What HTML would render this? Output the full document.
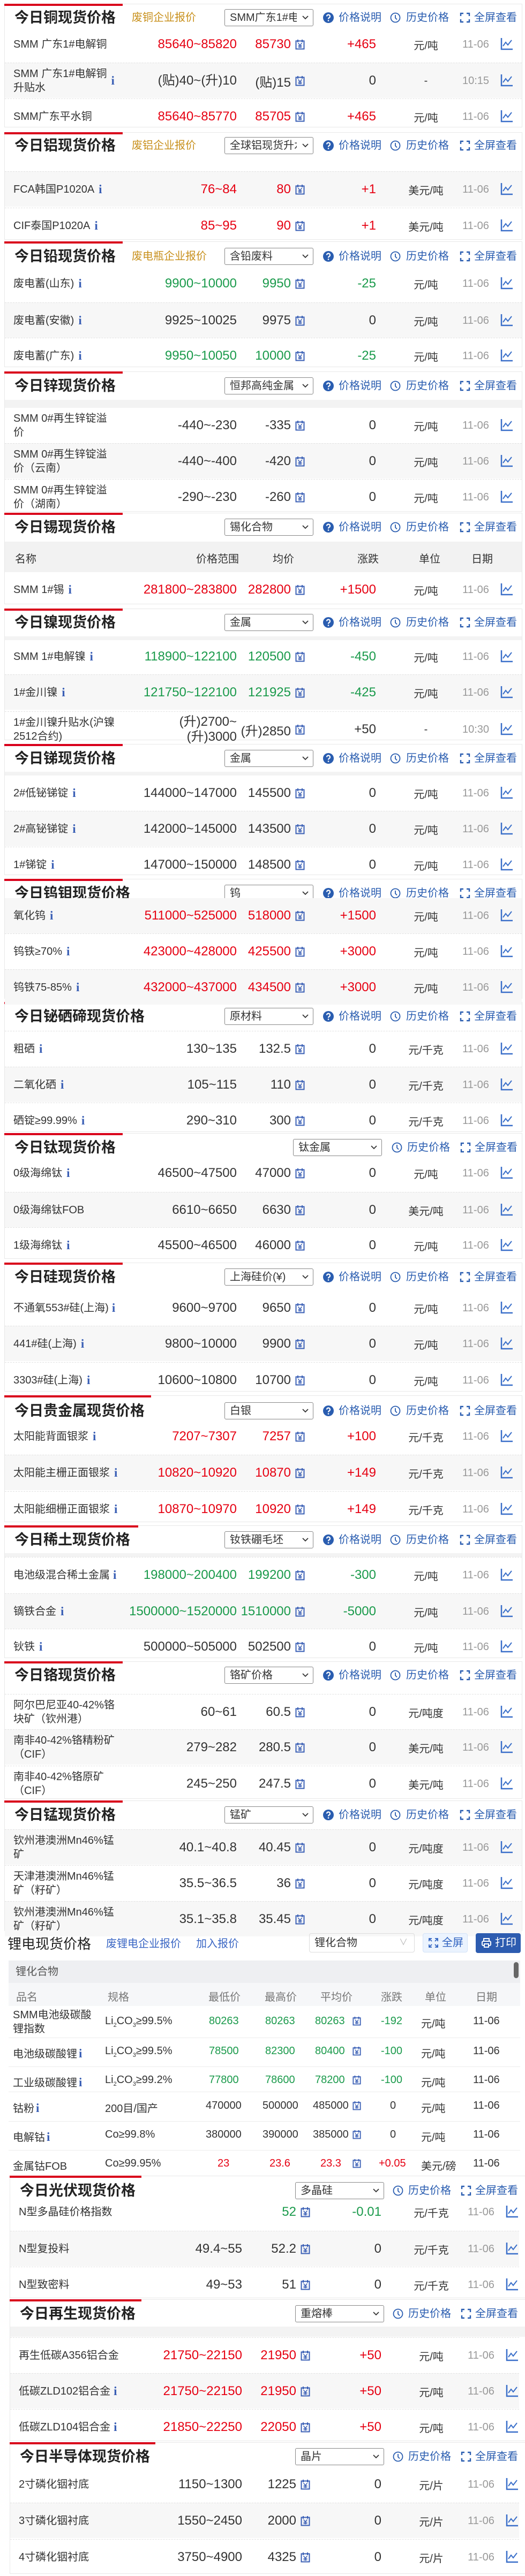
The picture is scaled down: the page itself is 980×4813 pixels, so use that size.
<!DOCTYPE html>
<html><head><meta charset="utf-8">
<style>
*{box-sizing:border-box}
body{margin:0;width:980px;height:4813px;position:relative;overflow:hidden;background:#fff;font-family:"Liberation Sans","Noto Sans CJK SC",sans-serif;color:#333}
.p{position:absolute;left:8px;width:967px;border:1px solid #e8e8e8;background:#fff}
.rb{position:absolute;left:8px;height:4px;background:#d9001b;width:221px}
.band{position:absolute;left:9px;width:965px;background:#f3f3f3}
.h{position:absolute;left:0;width:980px;height:40px;line-height:40px}
.h>*{position:absolute;top:0}
.t{left:27px;font-size:27px;font-weight:bold;color:#222;letter-spacing:0}
.lk{left:246px;font-size:20px;color:#c8901c}
.sel{left:419px;top:4px!important;width:166px;height:32px;border:1px solid #888;border-radius:3px;font-size:20px;line-height:30px;padding-left:9px;overflow:hidden;white-space:nowrap;background:#fff}
.sel svg{position:absolute;right:8px;top:11px}
.sel span{display:block;width:125px;overflow:hidden}
.hi{top:10px!important}
.ht{font-size:20px;color:#2a5db0}
.r{position:absolute;left:9px;width:965px;height:66px;border-top:1px dashed #e2e2e2}
.r.g{background:#f7f7f7}
.r>div{position:absolute;top:0;height:66px;display:flex;align-items:center}
.n{left:16px;width:240px;font-size:20px;line-height:26px}
.rg{left:180px;width:253px;justify-content:flex-end;font-size:24px;text-align:right;line-height:28px}
.av{left:420px;width:114px;justify-content:flex-end;font-size:24px}
.ch{left:580px;width:113px;justify-content:flex-end;font-size:24px}
.un{left:736px;width:100px;justify-content:center;font-size:20px}
.dt{left:839px;width:80px;justify-content:center;font-size:20px;color:#999}
.yi{position:absolute;left:542px;top:23px}
.gi{position:absolute;left:925px;top:20px}
.R{color:#e60012}.G{color:#1a9a4b}
.i{font-family:"Liberation Serif",serif;font-weight:bold;color:#3a5fb5;font-size:23px;margin-left:8px}
.sh{position:absolute;left:10px;top:0;width:980px;height:1px}
.lt{position:absolute;font-size:20px}
</style></head><body>
<svg width="0" height="0" style="position:absolute">
<defs>
<symbol id="y" viewBox="0 0 18 20"><rect x="1.5" y="3.5" width="15" height="15" fill="none" stroke="#3a5fb5" stroke-width="2"/><path d="M5 1v5M13 1v5" stroke="#3a5fb5" stroke-width="2"/><path d="M5.5 7.5l3.5 4 3.5-4M9 11.5v5M5.5 12.5h7M5.5 15h7" stroke="#3a5fb5" stroke-width="1.5" fill="none"/></symbol>
<symbol id="c" viewBox="0 0 24 24"><path d="M2 1v21h21" stroke="#3a6fc9" stroke-width="2.5" fill="none"/><path d="M5 16l5-7 4 5 7-9" stroke="#3a6fc9" stroke-width="2" fill="none"/></symbol>
<symbol id="q" viewBox="0 0 20 20"><circle cx="10" cy="10" r="10" fill="#2a5db0"/><path d="M7 7.5a3 3 0 1 1 4.5 2.6c-1 .6-1.5 1.1-1.5 2.4" stroke="#fff" stroke-width="2.2" fill="none"/><circle cx="10" cy="15.5" r="1.3" fill="#fff"/></symbol>
<symbol id="k" viewBox="0 0 20 20"><circle cx="10" cy="10" r="8.5" stroke="#2a5db0" stroke-width="1.8" fill="none"/><path d="M10 5v5.5l3 3" stroke="#2a5db0" stroke-width="1.8" fill="none"/></symbol>
<symbol id="f" viewBox="0 0 20 20"><path d="M2 7V2h5M13 2h5v5M18 13v5h-5M7 18H2v-5" stroke="#2a5db0" stroke-width="2.4" fill="none"/></symbol>
<symbol id="v" viewBox="0 0 12 8"><path d="M1 1l5 5 5-5" stroke="#333" stroke-width="1.8" fill="none"/></symbol>
</defs></svg>

<!-- panels -->
<div class="p" style="top:7px;height:231px"></div><div class="rb" style="top:7px"></div>
<div class="p" style="top:247px;height:201px"></div><div class="rb" style="top:247px"></div>
<div class="p" style="top:451px;height:235px"></div><div class="rb" style="top:451px"></div>
<div class="p" style="top:694px;height:262px"></div><div class="rb" style="top:694px"></div>
<div class="band" style="top:747px;height:15px"></div>
<div class="p" style="top:958px;height:171px"></div><div class="rb" style="top:958px"></div>
<div class="band" style="top:1012px;height:57px;background:#f2f2f2"></div>
<div class="p" style="top:1137px;height:246px"></div><div class="rb" style="top:1137px"></div>
<div class="band" style="top:1189px;height:7px"></div>
<div class="p" style="top:1390px;height:245px"></div><div class="rb" style="top:1390px"></div>
<div class="band" style="top:1442px;height:7px"></div>
<div class="p" style="top:1642px;height:224px"></div><div class="rb" style="top:1642px"></div>
<div class="p" style="top:1872px;height:243px"></div><div class="rb" style="top:1872px;width:278px"></div>
<div class="p" style="top:2117px;height:235px"></div><div class="rb" style="top:2117px"></div>
<div class="p" style="top:2359px;height:241px"></div><div class="rb" style="top:2359px"></div>
<div class="p" style="top:2607px;height:237px"></div><div class="rb" style="top:2607px;width:274px"></div>
<div class="p" style="top:2850px;height:248px"></div><div class="rb" style="top:2850px;width:250px"></div>
<div class="band" style="top:2902px;height:7px"></div>
<div class="p" style="top:3104px;height:257px"></div><div class="rb" style="top:3104px"></div>
<div class="p" style="top:3364px;height:244px"></div><div class="rb" style="top:3364px"></div>

<!-- headers -->
<div class="h" style="top:13px"><div class="t">今日铜现货价格</div><div class="lk">废铜企业报价</div><div class="sel"><span>SMM广东1#电解铜</span><svg width="12" height="8"><use href="#v"/></svg></div><svg class="hi" style="left:603px" width="20" height="20"><use href="#q"/></svg><div class="ht" style="left:632px">价格说明</div><svg class="hi" style="left:728px" width="20" height="20"><use href="#k"/></svg><div class="ht" style="left:758px">历史价格</div><svg class="hi" style="left:858px" width="20" height="20"><use href="#f"/></svg><div class="ht" style="left:885px">全屏查看</div></div>
<div class="h" style="top:252px"><div class="t">今日铝现货价格</div><div class="lk">废铝企业报价</div><div class="sel"><span>全球铝现货升水</span><svg width="12" height="8"><use href="#v"/></svg></div><svg class="hi" style="left:603px" width="20" height="20"><use href="#q"/></svg><div class="ht" style="left:632px">价格说明</div><svg class="hi" style="left:728px" width="20" height="20"><use href="#k"/></svg><div class="ht" style="left:758px">历史价格</div><svg class="hi" style="left:858px" width="20" height="20"><use href="#f"/></svg><div class="ht" style="left:885px">全屏查看</div></div>
<div class="h" style="top:459px"><div class="t">今日铅现货价格</div><div class="lk">废电瓶企业报价</div><div class="sel"><span>含铅废料</span><svg width="12" height="8"><use href="#v"/></svg></div><svg class="hi" style="left:603px" width="20" height="20"><use href="#q"/></svg><div class="ht" style="left:632px">价格说明</div><svg class="hi" style="left:728px" width="20" height="20"><use href="#k"/></svg><div class="ht" style="left:758px">历史价格</div><svg class="hi" style="left:858px" width="20" height="20"><use href="#f"/></svg><div class="ht" style="left:885px">全屏查看</div></div>
<div class="h" style="top:701px"><div class="t">今日锌现货价格</div><div class="sel"><span>恒邦高纯金属</span><svg width="12" height="8"><use href="#v"/></svg></div><svg class="hi" style="left:603px" width="20" height="20"><use href="#q"/></svg><div class="ht" style="left:632px">价格说明</div><svg class="hi" style="left:728px" width="20" height="20"><use href="#k"/></svg><div class="ht" style="left:758px">历史价格</div><svg class="hi" style="left:858px" width="20" height="20"><use href="#f"/></svg><div class="ht" style="left:885px">全屏查看</div></div>
<div class="h" style="top:965px"><div class="t">今日锡现货价格</div><div class="sel"><span>锡化合物</span><svg width="12" height="8"><use href="#v"/></svg></div><svg class="hi" style="left:603px" width="20" height="20"><use href="#q"/></svg><div class="ht" style="left:632px">价格说明</div><svg class="hi" style="left:728px" width="20" height="20"><use href="#k"/></svg><div class="ht" style="left:758px">历史价格</div><svg class="hi" style="left:858px" width="20" height="20"><use href="#f"/></svg><div class="ht" style="left:885px">全屏查看</div></div>
<div class="h" style="top:1143px"><div class="t">今日镍现货价格</div><div class="sel"><span>金属</span><svg width="12" height="8"><use href="#v"/></svg></div><svg class="hi" style="left:603px" width="20" height="20"><use href="#q"/></svg><div class="ht" style="left:632px">价格说明</div><svg class="hi" style="left:728px" width="20" height="20"><use href="#k"/></svg><div class="ht" style="left:758px">历史价格</div><svg class="hi" style="left:858px" width="20" height="20"><use href="#f"/></svg><div class="ht" style="left:885px">全屏查看</div></div>
<div class="h" style="top:1397px"><div class="t">今日锑现货价格</div><div class="sel"><span>金属</span><svg width="12" height="8"><use href="#v"/></svg></div><svg class="hi" style="left:603px" width="20" height="20"><use href="#q"/></svg><div class="ht" style="left:632px">价格说明</div><svg class="hi" style="left:728px" width="20" height="20"><use href="#k"/></svg><div class="ht" style="left:758px">历史价格</div><svg class="hi" style="left:858px" width="20" height="20"><use href="#f"/></svg><div class="ht" style="left:885px">全屏查看</div></div>
<div class="h" style="top:1649px"><div class="t">今日钨钼现货价格</div><div class="sel"><span>钨</span><svg width="12" height="8"><use href="#v"/></svg></div><svg class="hi" style="left:603px" width="20" height="20"><use href="#q"/></svg><div class="ht" style="left:632px">价格说明</div><svg class="hi" style="left:728px" width="20" height="20"><use href="#k"/></svg><div class="ht" style="left:758px">历史价格</div><svg class="hi" style="left:858px" width="20" height="20"><use href="#f"/></svg><div class="ht" style="left:885px">全屏查看</div></div>
<div class="h" style="top:1879px"><div class="t">今日铋硒碲现货价格</div><div class="sel"><span>原材料</span><svg width="12" height="8"><use href="#v"/></svg></div><svg class="hi" style="left:603px" width="20" height="20"><use href="#q"/></svg><div class="ht" style="left:632px">价格说明</div><svg class="hi" style="left:728px" width="20" height="20"><use href="#k"/></svg><div class="ht" style="left:758px">历史价格</div><svg class="hi" style="left:858px" width="20" height="20"><use href="#f"/></svg><div class="ht" style="left:885px">全屏查看</div></div>
<div class="h" style="top:2124px"><div class="t">今日钛现货价格</div><div class="sel" style="left:547px"><span>钛金属</span><svg width="12" height="8"><use href="#v"/></svg></div><svg class="hi" style="left:731px" width="20" height="20"><use href="#k"/></svg><div class="ht" style="left:760px">历史价格</div><svg class="hi" style="left:859px" width="20" height="20"><use href="#f"/></svg><div class="ht" style="left:886px">全屏查看</div></div>
<div class="h" style="top:2366px"><div class="t">今日硅现货价格</div><div class="sel"><span>上海硅价(¥)</span><svg width="12" height="8"><use href="#v"/></svg></div><svg class="hi" style="left:603px" width="20" height="20"><use href="#q"/></svg><div class="ht" style="left:632px">价格说明</div><svg class="hi" style="left:728px" width="20" height="20"><use href="#k"/></svg><div class="ht" style="left:758px">历史价格</div><svg class="hi" style="left:858px" width="20" height="20"><use href="#f"/></svg><div class="ht" style="left:885px">全屏查看</div></div>
<div class="h" style="top:2616px"><div class="t">今日贵金属现货价格</div><div class="sel"><span>白银</span><svg width="12" height="8"><use href="#v"/></svg></div><svg class="hi" style="left:603px" width="20" height="20"><use href="#q"/></svg><div class="ht" style="left:632px">价格说明</div><svg class="hi" style="left:728px" width="20" height="20"><use href="#k"/></svg><div class="ht" style="left:758px">历史价格</div><svg class="hi" style="left:858px" width="20" height="20"><use href="#f"/></svg><div class="ht" style="left:885px">全屏查看</div></div>
<div class="h" style="top:2857px"><div class="t">今日稀土现货价格</div><div class="sel"><span>钕铁硼毛坯</span><svg width="12" height="8"><use href="#v"/></svg></div><svg class="hi" style="left:603px" width="20" height="20"><use href="#q"/></svg><div class="ht" style="left:632px">价格说明</div><svg class="hi" style="left:728px" width="20" height="20"><use href="#k"/></svg><div class="ht" style="left:758px">历史价格</div><svg class="hi" style="left:858px" width="20" height="20"><use href="#f"/></svg><div class="ht" style="left:885px">全屏查看</div></div>
<div class="h" style="top:3110px"><div class="t">今日铬现货价格</div><div class="sel"><span>铬矿价格</span><svg width="12" height="8"><use href="#v"/></svg></div><svg class="hi" style="left:603px" width="20" height="20"><use href="#q"/></svg><div class="ht" style="left:632px">价格说明</div><svg class="hi" style="left:728px" width="20" height="20"><use href="#k"/></svg><div class="ht" style="left:758px">历史价格</div><svg class="hi" style="left:858px" width="20" height="20"><use href="#f"/></svg><div class="ht" style="left:885px">全屏查看</div></div>
<div class="h" style="top:3371px"><div class="t">今日锰现货价格</div><div class="sel"><span>锰矿</span><svg width="12" height="8"><use href="#v"/></svg></div><svg class="hi" style="left:603px" width="20" height="20"><use href="#q"/></svg><div class="ht" style="left:632px">价格说明</div><svg class="hi" style="left:728px" width="20" height="20"><use href="#k"/></svg><div class="ht" style="left:758px">历史价格</div><svg class="hi" style="left:858px" width="20" height="20"><use href="#f"/></svg><div class="ht" style="left:885px">全屏查看</div></div>

<!-- tin header row -->
<div class="lt" style="left:28px;top:1028px">名称</div>
<div class="lt" style="left:366px;top:1028px">价格范围</div>
<div class="lt" style="left:509px;top:1028px">均价</div>
<div class="lt" style="left:667px;top:1028px">涨跌</div>
<div class="lt" style="left:782px;top:1028px">单位</div>
<div class="lt" style="left:880px;top:1028px">日期</div>

<!-- copper rows -->
<div class="r" style="top:50px;border-top:none"><div class="n">SMM 广东1#电解铜</div><div class="rg R">85640~85820</div><div class="av R">85730</div><svg class="yi" width="18" height="20"><use href="#y"/></svg><div class="ch R">+465</div><div class="un">元/吨</div><div class="dt">11-06</div><svg class="gi" width="24" height="24"><use href="#c"/></svg></div>
<div class="r g" style="top:117px"><div class="n">SMM 广东1#电解铜<br>升贴水<b class="i">i</b></div><div class="rg">(贴)40~(升)10</div><div class="av">(贴)15</div><svg class="yi" width="18" height="20"><use href="#y"/></svg><div class="ch">0</div><div class="un">-</div><div class="dt">10:15</div><svg class="gi" width="24" height="24"><use href="#c"/></svg></div>
<div class="r" style="top:184px"><div class="n">SMM广东平水铜</div><div class="rg R">85640~85770</div><div class="av R">85705</div><svg class="yi" width="18" height="20"><use href="#y"/></svg><div class="ch R">+465</div><div class="un">元/吨</div><div class="dt">11-06</div><svg class="gi" width="24" height="24"><use href="#c"/></svg></div>

<!-- aluminum -->
<div class="r g" style="top:320px"><div class="n">FCA韩国P1020A<b class="i">i</b></div><div class="rg R">76~84</div><div class="av R">80</div><svg class="yi" width="18" height="20"><use href="#y"/></svg><div class="ch R">+1</div><div class="un">美元/吨</div><div class="dt">11-06</div><svg class="gi" width="24" height="24"><use href="#c"/></svg></div>
<div class="r" style="top:388px"><div class="n">CIF泰国P1020A<b class="i">i</b></div><div class="rg R">85~95</div><div class="av R">90</div><svg class="yi" width="18" height="20"><use href="#y"/></svg><div class="ch R">+1</div><div class="un">美元/吨</div><div class="dt">11-06</div><svg class="gi" width="24" height="24"><use href="#c"/></svg></div>

<!-- lead -->
<div class="r" style="top:497px;border-top:none"><div class="n">废电蓄(山东)<b class="i">i</b></div><div class="rg G">9900~10000</div><div class="av G">9950</div><svg class="yi" width="18" height="20"><use href="#y"/></svg><div class="ch G">-25</div><div class="un">元/吨</div><div class="dt">11-06</div><svg class="gi" width="24" height="24"><use href="#c"/></svg></div>
<div class="r g" style="top:565px"><div class="n">废电蓄(安徽)<b class="i">i</b></div><div class="rg">9925~10025</div><div class="av">9975</div><svg class="yi" width="18" height="20"><use href="#y"/></svg><div class="ch">0</div><div class="un">元/吨</div><div class="dt">11-06</div><svg class="gi" width="24" height="24"><use href="#c"/></svg></div>
<div class="r" style="top:631px"><div class="n">废电蓄(广东)<b class="i">i</b></div><div class="rg G">9950~10050</div><div class="av G">10000</div><svg class="yi" width="18" height="20"><use href="#y"/></svg><div class="ch G">-25</div><div class="un">元/吨</div><div class="dt">11-06</div><svg class="gi" width="24" height="24"><use href="#c"/></svg></div>

<!-- zinc -->
<div class="r" style="top:762px;border-top:none"><div class="n">SMM 0#再生锌锭溢<br>价</div><div class="rg">-440~-230</div><div class="av">-335</div><svg class="yi" width="18" height="20"><use href="#y"/></svg><div class="ch">0</div><div class="un">元/吨</div><div class="dt">11-06</div><svg class="gi" width="24" height="24"><use href="#c"/></svg></div>
<div class="r g" style="top:828px"><div class="n">SMM 0#再生锌锭溢<br>价（云南）</div><div class="rg">-440~-400</div><div class="av">-420</div><svg class="yi" width="18" height="20"><use href="#y"/></svg><div class="ch">0</div><div class="un">元/吨</div><div class="dt">11-06</div><svg class="gi" width="24" height="24"><use href="#c"/></svg></div>
<div class="r" style="top:895px"><div class="n">SMM 0#再生锌锭溢<br>价（湖南）</div><div class="rg">-290~-230</div><div class="av">-260</div><svg class="yi" width="18" height="20"><use href="#y"/></svg><div class="ch">0</div><div class="un">元/吨</div><div class="dt">11-06</div><svg class="gi" width="24" height="24"><use href="#c"/></svg></div>

<!-- tin -->
<div class="r" style="top:1069px;border-top:none"><div class="n">SMM 1#锡<b class="i">i</b></div><div class="rg R">281800~283800</div><div class="av R">282800</div><svg class="yi" width="18" height="20"><use href="#y"/></svg><div class="ch R">+1500</div><div class="un">元/吨</div><div class="dt">11-06</div><svg class="gi" width="24" height="24"><use href="#c"/></svg></div>

<!-- nickel -->
<div class="r" style="top:1194px;border-top:none"><div class="n">SMM 1#电解镍<b class="i">i</b></div><div class="rg G">118900~122100</div><div class="av G">120500</div><svg class="yi" width="18" height="20"><use href="#y"/></svg><div class="ch G">-450</div><div class="un">元/吨</div><div class="dt">11-06</div><svg class="gi" width="24" height="24"><use href="#c"/></svg></div>
<div class="r g" style="top:1260px"><div class="n">1#金川镍<b class="i">i</b></div><div class="rg G">121750~122100</div><div class="av G">121925</div><svg class="yi" width="18" height="20"><use href="#y"/></svg><div class="ch G">-425</div><div class="un">元/吨</div><div class="dt">11-06</div><svg class="gi" width="24" height="24"><use href="#c"/></svg></div>
<div class="r" style="top:1329px"><div class="n">1#金川镍升贴水(沪镍<br>2512合约)</div><div class="rg" style="flex-direction:column;align-items:flex-end;justify-content:center">(升)2700~<br>(升)3000</div><div class="av">(升)2850</div><svg class="yi" width="18" height="20"><use href="#y"/></svg><div class="ch">+50</div><div class="un">-</div><div class="dt">10:30</div><svg class="gi" width="24" height="24"><use href="#c"/></svg></div>

<!-- antimony -->
<div class="r" style="top:1449px;border-top:none"><div class="n">2#低铋锑锭<b class="i">i</b></div><div class="rg">144000~147000</div><div class="av">145500</div><svg class="yi" width="18" height="20"><use href="#y"/></svg><div class="ch">0</div><div class="un">元/吨</div><div class="dt">11-06</div><svg class="gi" width="24" height="24"><use href="#c"/></svg></div>
<div class="r g" style="top:1515px"><div class="n">2#高铋锑锭<b class="i">i</b></div><div class="rg">142000~145000</div><div class="av">143500</div><svg class="yi" width="18" height="20"><use href="#y"/></svg><div class="ch">0</div><div class="un">元/吨</div><div class="dt">11-06</div><svg class="gi" width="24" height="24"><use href="#c"/></svg></div>
<div class="r" style="top:1582px"><div class="n">1#锑锭<b class="i">i</b></div><div class="rg">147000~150000</div><div class="av">148500</div><svg class="yi" width="18" height="20"><use href="#y"/></svg><div class="ch">0</div><div class="un">元/吨</div><div class="dt">11-06</div><svg class="gi" width="24" height="24"><use href="#c"/></svg></div>

<!-- tungsten -->
<div class="r g" style="top:1678px;border-top:none"><div class="n">氧化钨<b class="i">i</b></div><div class="rg R">511000~525000</div><div class="av R">518000</div><svg class="yi" width="18" height="20"><use href="#y"/></svg><div class="ch R">+1500</div><div class="un">元/吨</div><div class="dt">11-06</div><svg class="gi" width="24" height="24"><use href="#c"/></svg></div>
<div class="r" style="top:1744px"><div class="n">钨铁≥70%<b class="i">i</b></div><div class="rg R">423000~428000</div><div class="av R">425500</div><svg class="yi" width="18" height="20"><use href="#y"/></svg><div class="ch R">+3000</div><div class="un">元/吨</div><div class="dt">11-06</div><svg class="gi" width="24" height="24"><use href="#c"/></svg></div>
<div class="r g" style="top:1811px"><div class="n">钨铁75-85%<b class="i">i</b></div><div class="rg R">432000~437000</div><div class="av R">434500</div><svg class="yi" width="18" height="20"><use href="#y"/></svg><div class="ch R">+3000</div><div class="un">元/吨</div><div class="dt">11-06</div><svg class="gi" width="24" height="24"><use href="#c"/></svg></div>

<!-- bi se te -->
<div class="r" style="top:1926px"><div class="n">粗硒<b class="i">i</b></div><div class="rg">130~135</div><div class="av">132.5</div><svg class="yi" width="18" height="20"><use href="#y"/></svg><div class="ch">0</div><div class="un">元/千克</div><div class="dt">11-06</div><svg class="gi" width="24" height="24"><use href="#c"/></svg></div>
<div class="r g" style="top:1993px"><div class="n">二氧化硒<b class="i">i</b></div><div class="rg">105~115</div><div class="av">110</div><svg class="yi" width="18" height="20"><use href="#y"/></svg><div class="ch">0</div><div class="un">元/千克</div><div class="dt">11-06</div><svg class="gi" width="24" height="24"><use href="#c"/></svg></div>
<div class="r" style="top:2060px"><div class="n">硒锭≥99.99%<b class="i">i</b></div><div class="rg">290~310</div><div class="av">300</div><svg class="yi" width="18" height="20"><use href="#y"/></svg><div class="ch">0</div><div class="un">元/千克</div><div class="dt">11-06</div><svg class="gi" width="24" height="24"><use href="#c"/></svg></div>

<!-- titanium -->
<div class="r" style="top:2159px;border-top:none"><div class="n">0级海绵钛<b class="i">i</b></div><div class="rg">46500~47500</div><div class="av">47000</div><svg class="yi" width="18" height="20"><use href="#y"/></svg><div class="ch">0</div><div class="un">元/吨</div><div class="dt">11-06</div><svg class="gi" width="24" height="24"><use href="#c"/></svg></div>
<div class="r g" style="top:2227px"><div class="n">0级海绵钛FOB</div><div class="rg">6610~6650</div><div class="av">6630</div><svg class="yi" width="18" height="20"><use href="#y"/></svg><div class="ch">0</div><div class="un">美元/吨</div><div class="dt">11-06</div><svg class="gi" width="24" height="24"><use href="#c"/></svg></div>
<div class="r" style="top:2293px"><div class="n">1级海绵钛<b class="i">i</b></div><div class="rg">45500~46500</div><div class="av">46000</div><svg class="yi" width="18" height="20"><use href="#y"/></svg><div class="ch">0</div><div class="un">元/吨</div><div class="dt">11-06</div><svg class="gi" width="24" height="24"><use href="#c"/></svg></div>

<!-- silicon -->
<div class="r" style="top:2411px;border-top:none"><div class="n">不通氧553#硅(上海)<br><b class="i" style="margin-left:6px">i</b></div><div class="rg">9600~9700</div><div class="av">9650</div><svg class="yi" width="18" height="20"><use href="#y"/></svg><div class="ch">0</div><div class="un">元/吨</div><div class="dt">11-06</div><svg class="gi" width="24" height="24"><use href="#c"/></svg></div>
<div class="r g" style="top:2477px"><div class="n">441#硅(上海)<b class="i">i</b></div><div class="rg">9800~10000</div><div class="av">9900</div><svg class="yi" width="18" height="20"><use href="#y"/></svg><div class="ch">0</div><div class="un">元/吨</div><div class="dt">11-06</div><svg class="gi" width="24" height="24"><use href="#c"/></svg></div>
<div class="r" style="top:2545px"><div class="n">3303#硅(上海)<b class="i">i</b></div><div class="rg">10600~10800</div><div class="av">10700</div><svg class="yi" width="18" height="20"><use href="#y"/></svg><div class="ch">0</div><div class="un">元/吨</div><div class="dt">11-06</div><svg class="gi" width="24" height="24"><use href="#c"/></svg></div>

<!-- precious -->
<div class="r" style="top:2651px;border-top:none"><div class="n">太阳能背面银浆<b class="i">i</b></div><div class="rg R">7207~7307</div><div class="av R">7257</div><svg class="yi" width="18" height="20"><use href="#y"/></svg><div class="ch R">+100</div><div class="un">元/千克</div><div class="dt">11-06</div><svg class="gi" width="24" height="24"><use href="#c"/></svg></div>
<div class="r g" style="top:2718px"><div class="n">太阳能主栅正面银浆<b class="i">i</b></div><div class="rg R">10820~10920</div><div class="av R">10870</div><svg class="yi" width="18" height="20"><use href="#y"/></svg><div class="ch R">+149</div><div class="un">元/千克</div><div class="dt">11-06</div><svg class="gi" width="24" height="24"><use href="#c"/></svg></div>
<div class="r" style="top:2786px"><div class="n">太阳能细栅正面银浆<b class="i">i</b></div><div class="rg R">10870~10970</div><div class="av R">10920</div><svg class="yi" width="18" height="20"><use href="#y"/></svg><div class="ch R">+149</div><div class="un">元/千克</div><div class="dt">11-06</div><svg class="gi" width="24" height="24"><use href="#c"/></svg></div>

<!-- rare earth -->
<div class="r" style="top:2909px"><div class="n">电池级混合稀土金属<br><b class="i" style="margin-left:6px">i</b></div><div class="rg G">198000~200400</div><div class="av G">199200</div><svg class="yi" width="18" height="20"><use href="#y"/></svg><div class="ch G">-300</div><div class="un">元/吨</div><div class="dt">11-06</div><svg class="gi" width="24" height="24"><use href="#c"/></svg></div>
<div class="r g" style="top:2977px"><div class="n">镝铁合金<b class="i">i</b></div><div class="rg G">1500000~1520000</div><div class="av G">1510000</div><svg class="yi" width="18" height="20"><use href="#y"/></svg><div class="ch G">-5000</div><div class="un">元/吨</div><div class="dt">11-06</div><svg class="gi" width="24" height="24"><use href="#c"/></svg></div>
<div class="r" style="top:3043px"><div class="n">钬铁<b class="i">i</b></div><div class="rg">500000~505000</div><div class="av">502500</div><svg class="yi" width="18" height="20"><use href="#y"/></svg><div class="ch">0</div><div class="un">元/吨</div><div class="dt">11-06</div><svg class="gi" width="24" height="24"><use href="#c"/></svg></div>

<!-- chromium -->
<div class="r" style="top:3165px"><div class="n">阿尔巴尼亚40-42%铬<br>块矿（钦州港）</div><div class="rg">60~61</div><div class="av">60.5</div><svg class="yi" width="18" height="20"><use href="#y"/></svg><div class="ch">0</div><div class="un">元/吨度</div><div class="dt">11-06</div><svg class="gi" width="24" height="24"><use href="#c"/></svg></div>
<div class="r g" style="top:3231px"><div class="n">南非40-42%铬精粉矿<br>（CIF）</div><div class="rg">279~282</div><div class="av">280.5</div><svg class="yi" width="18" height="20"><use href="#y"/></svg><div class="ch">0</div><div class="un">美元/吨</div><div class="dt">11-06</div><svg class="gi" width="24" height="24"><use href="#c"/></svg></div>
<div class="r" style="top:3299px"><div class="n">南非40-42%铬原矿<br>（CIF）</div><div class="rg">245~250</div><div class="av">247.5</div><svg class="yi" width="18" height="20"><use href="#y"/></svg><div class="ch">0</div><div class="un">美元/吨</div><div class="dt">11-06</div><svg class="gi" width="24" height="24"><use href="#c"/></svg></div>

<!-- manganese -->
<div class="r g" style="top:3418px"><div class="n">钦州港澳洲Mn46%锰<br>矿</div><div class="rg">40.1~40.8</div><div class="av">40.45</div><svg class="yi" width="18" height="20"><use href="#y"/></svg><div class="ch">0</div><div class="un">元/吨度</div><div class="dt">11-06</div><svg class="gi" width="24" height="24"><use href="#c"/></svg></div>
<div class="r" style="top:3485px"><div class="n">天津港澳洲Mn46%锰<br>矿（籽矿）</div><div class="rg">35.5~36.5</div><div class="av">36</div><svg class="yi" width="18" height="20"><use href="#y"/></svg><div class="ch">0</div><div class="un">元/吨度</div><div class="dt">11-06</div><svg class="gi" width="24" height="24"><use href="#c"/></svg></div>
<div class="r g" style="top:3552px"><div class="n">钦州港澳洲Mn46%锰<br>矿（籽矿）</div><div class="rg">35.1~35.8</div><div class="av">35.45</div><svg class="yi" width="18" height="20"><use href="#y"/></svg><div class="ch">0</div><div class="un">元/吨度</div><div class="dt">11-06</div><svg class="gi" width="24" height="24"><use href="#c"/></svg></div>

<!-- lithium -->
<div style="position:absolute;left:14px;top:3613px;font-size:26px;line-height:38px;color:#222">锂电现货价格</div>
<div style="position:absolute;left:198px;top:3618px;font-size:20px;line-height:28px;color:#3a66c4">废锂电企业报价</div>
<div style="position:absolute;left:366px;top:3618px;font-size:20px;line-height:28px;color:#3a66c4">加入报价</div>
<div style="position:absolute;left:577px;top:3612px;width:197px;height:36px;border:1px solid #dcdcdc;border-radius:4px;font-size:20px;line-height:34px;padding-left:9px;color:#333">锂化合物<span style="position:absolute;right:12px;top:0;color:#bbb;font-size:16px">∨</span></div>
<div style="position:absolute;left:789px;top:3612px;width:84px;height:36px;border:1px solid #d3e2f7;background:#ebf3fe;border-radius:4px;font-size:20px;line-height:34px;color:#2f62c0;padding-left:35px"><svg style="position:absolute;left:10px;top:8px" width="18" height="18" viewBox="0 0 18 18"><path d="M1 6V1h5M1 1l5 5M12 1h5v5M17 1l-5 5M17 12v5h-5M17 17l-5-5M6 17H1v-5M1 17l5-5" stroke="#2f62c0" stroke-width="1.8" fill="none"/></svg>全屏</div>
<div style="position:absolute;left:888px;top:3612px;width:84px;height:37px;background:#2d5cb0;border-radius:4px;font-size:20px;line-height:37px;color:#fff;padding-left:36px"><svg style="position:absolute;left:11px;top:9px" width="18" height="18" viewBox="0 0 18 18"><rect x="4" y="1" width="10" height="5" fill="none" stroke="#fff" stroke-width="2"/><rect x="1" y="6" width="16" height="8" rx="2" fill="none" stroke="#fff" stroke-width="2"/><rect x="5" y="11" width="8" height="6" fill="#2d5cb0" stroke="#fff" stroke-width="2"/></svg>打印</div>
<div style="position:absolute;left:16px;top:3663px;width:955px;height:42px;background:#eeeff2;font-size:20px;line-height:42px;padding-left:13px;color:#555">锂化合物</div>
<div style="position:absolute;left:959px;top:3666px;width:9px;height:30px;background:#666;border-radius:5px"></div>
<div style="position:absolute;left:16px;top:3705px;width:955px;height:43px;background:#f6f7f9"></div>
<div class="lt" style="left:30px;top:3715px;color:#777">品名</div>
<div class="lt" style="left:201px;top:3715px;color:#777">规格</div>
<div class="lt" style="left:389px;top:3715px;color:#777">最低价</div>
<div class="lt" style="left:494px;top:3715px;color:#777">最高价</div>
<div class="lt" style="left:598px;top:3715px;color:#777">平均价</div>
<div class="lt" style="left:711px;top:3715px;color:#777">涨跌</div>
<div class="lt" style="left:793px;top:3715px;color:#777">单位</div>
<div class="lt" style="left:888px;top:3715px;color:#777">日期</div>
<div style="position:absolute;left:16px;top:3807px;width:955px;border-top:1px solid #ececec"></div>
<div style="position:absolute;left:16px;top:3861px;width:955px;border-top:1px solid #ececec"></div>
<div style="position:absolute;left:16px;top:3908px;width:955px;border-top:1px solid #ececec"></div>
<div style="position:absolute;left:16px;top:3963px;width:955px;border-top:1px solid #ececec"></div>
<div style="position:absolute;left:16px;top:4017px;width:955px;border-top:1px solid #ececec"></div>

<div class="lt" style="left:24px;top:3752px;line-height:26px">SMM电池级碳酸<br>锂指数</div>
<div class="lt" style="left:196px;top:3765px">Li<sub style="font-size:11px">2</sub>CO<sub style="font-size:11px">3</sub>≥99.5%</div>
<div class="lt G" style="left:390px;top:3765px">80263</div><div class="lt G" style="left:495px;top:3765px">80263</div><div class="lt G" style="left:588px;top:3765px">80263</div>
<svg style="position:absolute;left:658px;top:3767px" width="16" height="18"><use href="#y"/></svg>
<div class="lt G" style="left:711px;top:3765px">-192</div><div class="lt" style="left:786px;top:3765px">元/吨</div><div class="lt" style="left:883px;top:3765px">11-06</div>

<div class="lt" style="left:24px;top:3821px">电池级碳酸锂<b class="i" style="margin-left:3px">i</b></div>
<div class="lt" style="left:196px;top:3821px">Li<sub style="font-size:11px">2</sub>CO<sub style="font-size:11px">3</sub>≥99.5%</div>
<div class="lt G" style="left:390px;top:3821px">78500</div><div class="lt G" style="left:495px;top:3821px">82300</div><div class="lt G" style="left:588px;top:3821px">80400</div>
<svg style="position:absolute;left:658px;top:3823px" width="16" height="18"><use href="#y"/></svg>
<div class="lt G" style="left:711px;top:3821px">-100</div><div class="lt" style="left:786px;top:3821px">元/吨</div><div class="lt" style="left:883px;top:3821px">11-06</div>

<div class="lt" style="left:24px;top:3875px">工业级碳酸锂<b class="i" style="margin-left:3px">i</b></div>
<div class="lt" style="left:196px;top:3875px">Li<sub style="font-size:11px">2</sub>CO<sub style="font-size:11px">3</sub>≥99.2%</div>
<div class="lt G" style="left:390px;top:3875px">77800</div><div class="lt G" style="left:495px;top:3875px">78600</div><div class="lt G" style="left:588px;top:3875px">78200</div>
<svg style="position:absolute;left:658px;top:3877px" width="16" height="18"><use href="#y"/></svg>
<div class="lt G" style="left:711px;top:3875px">-100</div><div class="lt" style="left:786px;top:3875px">元/吨</div><div class="lt" style="left:883px;top:3875px">11-06</div>

<div class="lt" style="left:24px;top:3923px">钴粉<b class="i" style="margin-left:3px">i</b></div>
<div class="lt" style="left:196px;top:3923px">200目/国产</div>
<div class="lt" style="left:384px;top:3923px">470000</div><div class="lt" style="left:490px;top:3923px">500000</div><div class="lt" style="left:584px;top:3923px">485000</div>
<svg style="position:absolute;left:658px;top:3925px" width="16" height="18"><use href="#y"/></svg>
<div class="lt" style="left:728px;top:3923px">0</div><div class="lt" style="left:786px;top:3923px">元/吨</div><div class="lt" style="left:883px;top:3923px">11-06</div>

<div class="lt" style="left:24px;top:3977px">电解钴<b class="i" style="margin-left:3px">i</b></div>
<div class="lt" style="left:196px;top:3977px">Co≥99.8%</div>
<div class="lt" style="left:384px;top:3977px">380000</div><div class="lt" style="left:490px;top:3977px">390000</div><div class="lt" style="left:584px;top:3977px">385000</div>
<svg style="position:absolute;left:658px;top:3979px" width="16" height="18"><use href="#y"/></svg>
<div class="lt" style="left:728px;top:3977px">0</div><div class="lt" style="left:786px;top:3977px">元/吨</div><div class="lt" style="left:883px;top:3977px">11-06</div>

<div class="lt" style="left:24px;top:4031px">金属钴FOB</div>
<div class="lt" style="left:196px;top:4031px">Co≥99.95%</div>
<div class="lt R" style="left:406px;top:4031px">23</div><div class="lt R" style="left:503px;top:4031px">23.6</div><div class="lt R" style="left:598px;top:4031px">23.3</div>
<svg style="position:absolute;left:658px;top:4033px" width="16" height="18"><use href="#y"/></svg>
<div class="lt R" style="left:707px;top:4031px">+0.05</div><div class="lt" style="left:786px;top:4031px">美元/磅</div><div class="lt" style="left:883px;top:4031px">11-06</div>

<!-- shifted last sections -->
<div class="sh">
<div class="p" style="top:4065px;height:229px"></div><div class="rb" style="top:4065px;width:246px"></div>
<div class="p" style="top:4296px;height:265px"></div><div class="rb" style="top:4296px;width:246px"></div>
<div class="band" style="top:4347px;height:19px"></div>
<div class="p" style="top:4563px;height:246px"></div><div class="rb" style="top:4563px;width:272px"></div>

<div class="h" style="top:4073px"><div class="t">今日光伏现货价格</div><div class="sel" style="left:541px"><span>多晶硅</span><svg width="12" height="8"><use href="#v"/></svg></div><svg class="hi" style="left:723px" width="20" height="20"><use href="#k"/></svg><div class="ht" style="left:752px">历史价格</div><svg class="hi" style="left:850px" width="20" height="20"><use href="#f"/></svg><div class="ht" style="left:877px">全屏查看</div></div>
<div class="h" style="top:4303px"><div class="t">今日再生现货价格</div><div class="sel" style="left:541px"><span>重熔棒</span><svg width="12" height="8"><use href="#v"/></svg></div><svg class="hi" style="left:723px" width="20" height="20"><use href="#k"/></svg><div class="ht" style="left:752px">历史价格</div><svg class="hi" style="left:850px" width="20" height="20"><use href="#f"/></svg><div class="ht" style="left:877px">全屏查看</div></div>
<div class="h" style="top:4570px"><div class="t">今日半导体现货价格</div><div class="sel" style="left:541px"><span>晶片</span><svg width="12" height="8"><use href="#v"/></svg></div><svg class="hi" style="left:723px" width="20" height="20"><use href="#k"/></svg><div class="ht" style="left:752px">历史价格</div><svg class="hi" style="left:850px" width="20" height="20"><use href="#f"/></svg><div class="ht" style="left:877px">全屏查看</div></div>

<div class="r" style="top:4100px;border-top:none;width:950px"><div class="n">N型多晶硅价格指数</div><div class="rg"></div><div class="av G">52</div><svg class="yi" width="18" height="20"><use href="#y"/></svg><div class="ch G">-0.01</div><div class="un">元/千克</div><div class="dt">11-06</div><svg class="gi" width="24" height="24"><use href="#c"/></svg></div>
<div class="r g" style="top:4168px;width:950px"><div class="n">N型复投料</div><div class="rg">49.4~55</div><div class="av">52.2</div><svg class="yi" width="18" height="20"><use href="#y"/></svg><div class="ch">0</div><div class="un">元/千克</div><div class="dt">11-06</div><svg class="gi" width="24" height="24"><use href="#c"/></svg></div>
<div class="r" style="top:4235px;width:950px"><div class="n">N型致密料</div><div class="rg">49~53</div><div class="av">51</div><svg class="yi" width="18" height="20"><use href="#y"/></svg><div class="ch">0</div><div class="un">元/千克</div><div class="dt">11-06</div><svg class="gi" width="24" height="24"><use href="#c"/></svg></div>

<div class="r" style="top:4367px;width:950px"><div class="n">再生低碳A356铝合金</div><div class="rg R">21750~22150</div><div class="av R">21950</div><svg class="yi" width="18" height="20"><use href="#y"/></svg><div class="ch R">+50</div><div class="un">元/吨</div><div class="dt">11-06</div><svg class="gi" width="24" height="24"><use href="#c"/></svg></div>
<div class="r g" style="top:4434px;width:950px"><div class="n">低碳ZLD102铝合金<br><b class="i" style="margin-left:6px">i</b></div><div class="rg R">21750~22150</div><div class="av R">21950</div><svg class="yi" width="18" height="20"><use href="#y"/></svg><div class="ch R">+50</div><div class="un">元/吨</div><div class="dt">11-06</div><svg class="gi" width="24" height="24"><use href="#c"/></svg></div>
<div class="r" style="top:4501px;width:950px"><div class="n">低碳ZLD104铝合金<br><b class="i" style="margin-left:6px">i</b></div><div class="rg R">21850~22250</div><div class="av R">22050</div><svg class="yi" width="18" height="20"><use href="#y"/></svg><div class="ch R">+50</div><div class="un">元/吨</div><div class="dt">11-06</div><svg class="gi" width="24" height="24"><use href="#c"/></svg></div>

<div class="r" style="top:4609px;border-top:none;width:950px"><div class="n">2寸磷化铟衬底</div><div class="rg">1150~1300</div><div class="av">1225</div><svg class="yi" width="18" height="20"><use href="#y"/></svg><div class="ch">0</div><div class="un">元/片</div><div class="dt">11-06</div><svg class="gi" width="24" height="24"><use href="#c"/></svg></div>
<div class="r g" style="top:4676px;width:950px"><div class="n">3寸磷化铟衬底</div><div class="rg">1550~2450</div><div class="av">2000</div><svg class="yi" width="18" height="20"><use href="#y"/></svg><div class="ch">0</div><div class="un">元/片</div><div class="dt">11-06</div><svg class="gi" width="24" height="24"><use href="#c"/></svg></div>
<div class="r" style="top:4744px;width:950px"><div class="n">4寸磷化铟衬底</div><div class="rg">3750~4900</div><div class="av">4325</div><svg class="yi" width="18" height="20"><use href="#y"/></svg><div class="ch">0</div><div class="un">元/片</div><div class="dt">11-06</div><svg class="gi" width="24" height="24"><use href="#c"/></svg></div>
</div>
</body></html>
